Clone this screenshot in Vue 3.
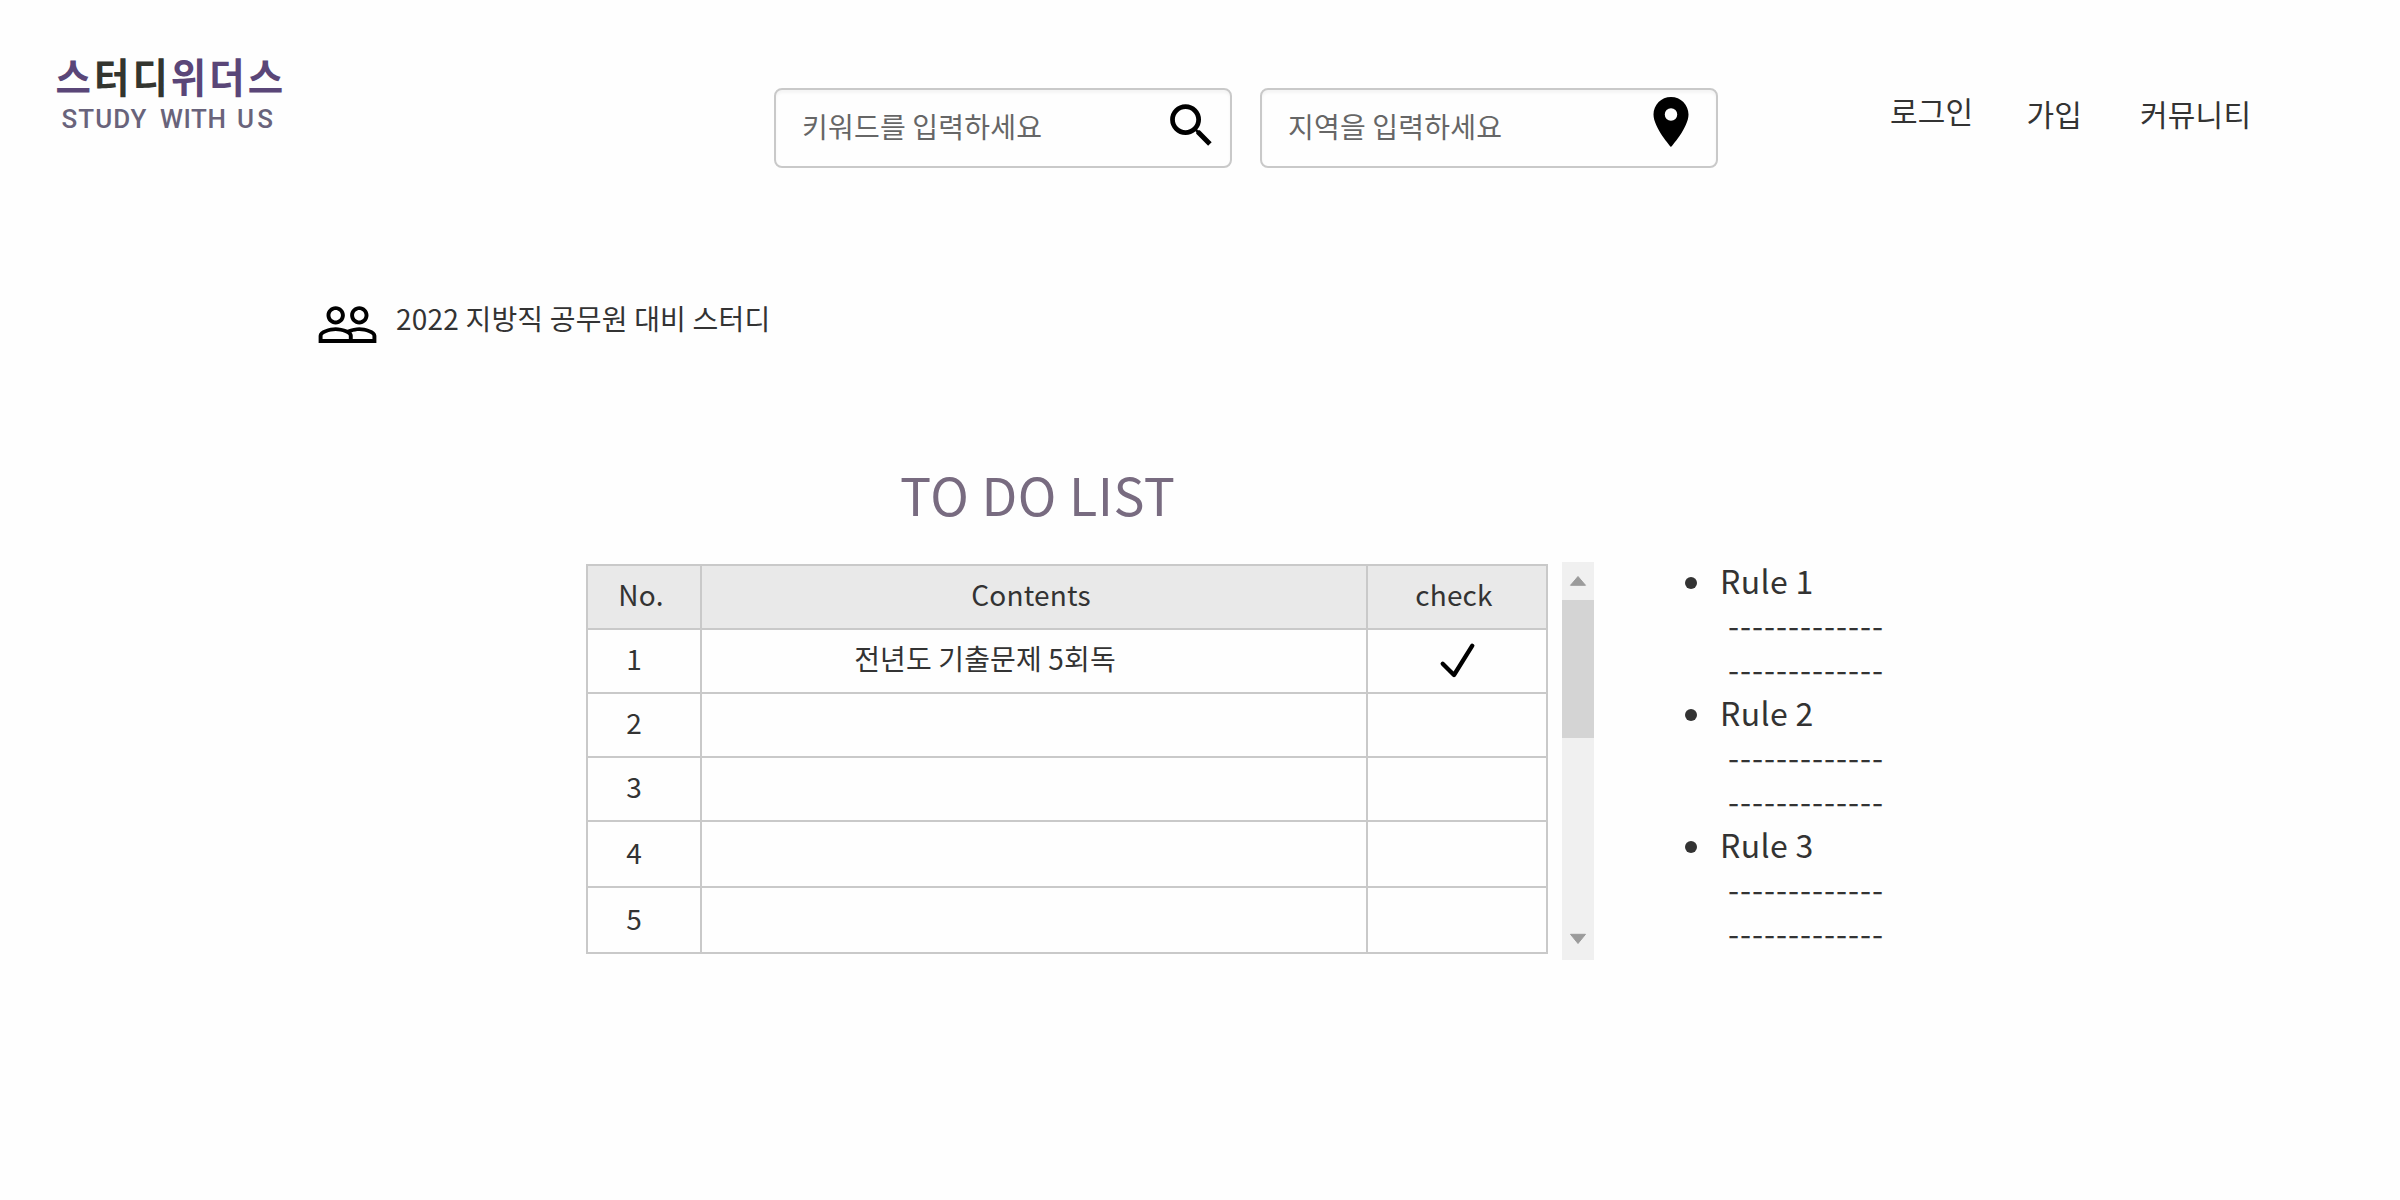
<script setup>
const nav = [
  { label: '로그인', cls: 'login' },
  { label: '가입', cls: 'join' },
  { label: '커뮤니티', cls: 'community' },
]
const rows = [
  { no: 1, text: '전년도 기출문제 5회독', done: true },
  { no: 2, text: '', done: false },
  { no: 3, text: '', done: false },
  { no: 4, text: '', done: false },
  { no: 5, text: '', done: false },
]
const rules = ['Rule 1', 'Rule 2', 'Rule 3']
const dashes = '-------------'
</script>

<template>
  <div class="page">
    <header class="header">
      <svg class="logo" width="240" height="80" viewBox="0 0 240 80">
        <g class="logo-ko" transform="translate(5.5 42.5) scale(1.1 1.17)">
          <text y="0" textLength="207" lengthAdjust="spacing"><tspan class="violet">스</tspan><tspan class="ink">터디</tspan><tspan class="violet">위더스</tspan></text>
        </g>
        <g class="logo-en">
          <text x="11.5" y="78" textLength="85" lengthAdjust="spacing">STUDY</text>
          <text x="110" y="78" textLength="66" lengthAdjust="spacing">WITH</text>
          <text x="187" y="78" textLength="36" lengthAdjust="spacing">US</text>
        </g>
      </svg>

      <div class="field keyword">
        <span>키워드를 입력하세요</span>
        <svg class="search-icon" width="57" height="57" viewBox="0 0 24 24">
          <path d="M15.5 14h-.79l-.28-.27A6.471 6.471 0 0 0 16 9.5 6.5 6.5 0 1 0 9.5 16c1.61 0 3.09-.59 4.23-1.57l.27.28v.79l5 4.99L20.49 19l-4.99-5zm-6 0C7.01 14 5 11.99 5 9.5S7.01 5 9.5 5 14 7.01 14 9.5 11.99 14 9.5 14z" />
        </svg>
      </div>
      <div class="field region">
        <span>지역을 입력하세요</span>
        <svg class="pin-icon" width="60" height="60" viewBox="0 0 24 24">
          <path d="M12 2C8.13 2 5 5.13 5 9c0 5.25 7 13 7 13s7-7.75 7-13c0-3.87-3.13-7-7-7zm0 9.5a2.5 2.5 0 0 1 0-5 2.5 2.5 0 0 1 0 5z" />
        </svg>
      </div>

      <nav class="nav">
        <a v-for="n in nav" :key="n.label" :class="n.cls">{{ n.label }}</a>
      </nav>
    </header>

    <section class="group">
      <svg width="63" height="63" viewBox="0 0 24 24">
        <path d="M16.5 13c-1.2 0-3.07.34-4.5 1-1.43-.67-3.3-1-4.5-1C5.33 13 1 14.08 1 16.25V19h22v-2.75c0-2.17-4.33-3.25-6.5-3.25zm-4 4.5h-10v-1.25c0-.54 2.56-1.75 5-1.75s5 1.21 5 1.75v1.25zm9 0H14v-1.25c0-.46-.2-.86-.52-1.22.88-.3 1.96-.53 3.02-.53 2.44 0 5 1.21 5 1.75v1.25zM7.5 12c1.93 0 3.5-1.57 3.5-3.5S9.43 5 7.5 5 4 6.57 4 8.5 5.57 12 7.5 12zm0-5.5c1.1 0 2 .9 2 2s-.9 2-2 2-2-.9-2-2 .9-2 2-2zm9 5.5c1.93 0 3.5-1.57 3.5-3.5S18.43 5 16.5 5 13 6.57 13 8.5s1.57 3.5 3.5 3.5zm0-5.5c1.1 0 2 .9 2 2s-.9 2-2 2-2-.9-2-2 .9-2 2-2z" />
      </svg>
      <span>2022 지방직 공무원 대비 스터디</span>
    </section>

    <h1 class="title">TO DO LIST</h1>

    <main class="board">
      <div class="table">
        <div class="row head">
          <div class="cell">No.</div>
          <div class="cell">Contents</div>
          <div class="cell">check</div>
        </div>
        <div v-for="r in rows" :key="r.no" class="row" :class="{ tall: r.no > 3 }">
          <div class="cell no">{{ r.no }}</div>
          <div class="cell text">{{ r.text }}</div>
          <div class="cell mark">
            <svg v-if="r.done" width="40" height="40" viewBox="0 0 40 40">
              <path d="M4.7 23.7L16 35L34.3 5.7" />
            </svg>
          </div>
        </div>
      </div>

      <div class="scrollbar">
        <svg class="arrow" width="32" height="38" viewBox="0 0 32 38"><path d="M16 14.5L23.5 23.3H8.5z" /></svg>
        <div class="thumb"></div>
        <svg class="arrow down" width="32" height="38" viewBox="0 0 32 38"><path d="M16 21.5L23.5 12.3H8.5z" /></svg>
      </div>

      <ul class="rules">
        <li v-for="rule in rules" :key="rule">
          <div class="rule"><i class="dot"></i>{{ rule }}</div>
          <div class="dashes">{{ dashes }}</div>
          <div class="dashes">{{ dashes }}</div>
        </li>
      </ul>
    </main>
  </div>
</template>

<style>
body {
  margin: 0;
  background: #fefefe;
}
</style>

<style scoped>
.page {
  box-sizing: border-box;
  width: 2400px;
  height: 1200px;
  overflow: hidden;
  background: #fefefe;
  color: #333;
  font-family: "Noto Sans CJK KR", sans-serif;
  font-size: 28px;
  line-height: 40px;
}
.header {
  display: flex;
  align-items: flex-start;
  height: 293px;
}
.logo {
  margin: 50px 0 0 50px;
  flex: none;
  overflow: visible;
}
.logo-ko {
  font-size: 35px;
  font-weight: 700;
}
.logo-en {
  font-family: Roboto, sans-serif;
  font-size: 26px;
  font-weight: 500;
  fill: #69637b;
}
.violet { fill: #5a4678; }
.ink { fill: #33352f; }
.field {
  box-sizing: border-box;
  flex: none;
  display: flex;
  justify-content: space-between;
  align-items: flex-start;
  width: 458px;
  height: 80px;
  margin-top: 88px;
  padding-left: 26px;
  border: 2px solid #c9c9c9;
  border-radius: 8px;
  box-shadow: inset 0 3px 3px rgba(0, 0, 0, 0.04);
  color: #666;
  letter-spacing: 0.2px;
}
.field span { margin-top: 16px; }
.field svg { fill: #000; }
.keyword { margin-left: 484px; }
.region { margin-left: 28px; }
.search-icon { margin: 7px 10.5px 0 0; }
.pin-icon { margin: 2px 15px 0 0; }
.nav {
  display: flex;
  font-size: 30px;
  letter-spacing: 0.2px;
  margin-left: 172px;
  white-space: nowrap;
}
.login { margin-top: 90px; }
.join { margin: 93px 0 0 53px; }
.community { margin: 93px 0 0 58px; }
.group {
  display: flex;
  align-items: flex-start;
  height: 169px;
  padding-left: 315.5px;
}
.group span {
  margin: 5px 0 0 17.5px;
  letter-spacing: 0.2px;
}
.title {
  margin: 0 0 0 900px;
  font-size: 52px;
  line-height: 64px;
  font-weight: 400;
  letter-spacing: 0.5px;
  color: #786b80;
}
.board {
  display: flex;
  align-items: flex-start;
  margin: 32px 0 0 586px;
}
.table {
  flex: none;
  border-top: 2px solid #c9c9c9;
  border-left: 2px solid #c9c9c9;
  margin-top: 6px;
}
.row {
  display: grid;
  grid-template-columns: 114px 666px 180px;
  height: 64px;
}
.row.tall { height: 66px; }
.cell {
  box-sizing: border-box;
  display: flex;
  align-items: center;
  justify-content: center;
  border-right: 2px solid #c9c9c9;
  border-bottom: 2px solid #c9c9c9;
  padding: 0 6px 6px 0;
}
.tall .cell { padding-bottom: 4px; }
.head .cell {
  background: #e9e9e9;
  letter-spacing: 0.2px;
}
.cell.no { padding-right: 20px; }
.cell.text {
  padding-right: 98px;
  letter-spacing: 0.15px;
}
.cell.mark { padding: 0 0 2px 2px; }
.mark path {
  fill: none;
  stroke: #000;
  stroke-width: 4.3;
  stroke-linecap: round;
  stroke-linejoin: round;
}
.scrollbar {
  display: flex;
  flex-direction: column;
  flex: none;
  width: 32px;
  height: 398px;
  margin: 4px 0 0 14px;
  background: #f0f0f0;
}
.arrow {
  display: block;
  fill: #9b9b9b;
  stroke: #9b9b9b;
  stroke-width: 1;
  stroke-linejoin: round;
}
.arrow.down { margin-top: auto; }
.thumb {
  height: 138px;
  background: #d4d4d4;
}
.rules {
  list-style: none;
  margin: 0 0 0 91px;
  padding: 0;
  font-size: 32px;
  line-height: 44px;
}
.rule {
  display: flex;
  align-items: center;
  letter-spacing: 0.35px;
}
.dot {
  width: 12px;
  height: 12px;
  margin: 5px 23px 0 0;
  border-radius: 50%;
  background: #333;
}
.dashes {
  padding-left: 43px;
  letter-spacing: 0.9px;
}
</style>
